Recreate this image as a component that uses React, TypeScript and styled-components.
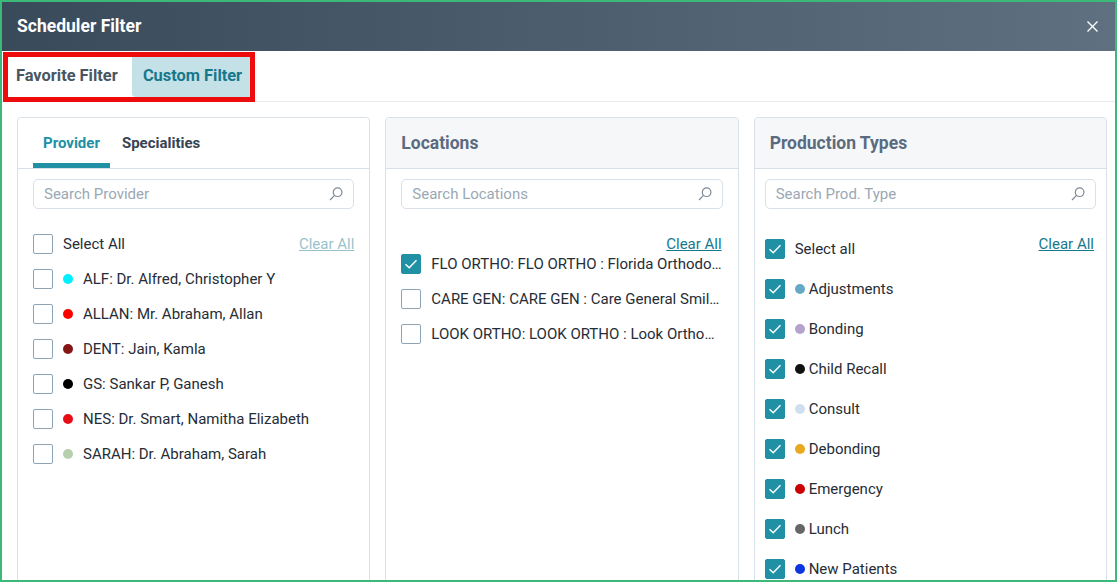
import React from 'react';
import styled, { createGlobalStyle } from 'styled-components';

const GlobalStyle = createGlobalStyle`
    html, body {
        margin: 0;
        height: 100%;
        overflow: hidden;
        background: #fff;
    }
    * {
        box-sizing: border-box;
    }
`;

const Frame = styled.div`
    height: 582px;
    border: 2px solid #3cb878;
    display: flex;
    flex-direction: column;
    overflow: hidden;
    background: #fff;
    font-family: Roboto, "Liberation Sans", sans-serif;
    font-size: 15px;
    color: #262d36;
`;

const Header = styled.div`
    height: 49px;
    flex-shrink: 0;
    display: flex;
    justify-content: space-between;
    align-items: center;
    padding: 0 17px 0 15px;
    background: linear-gradient(90deg, #394a5b 0%, #5f7080 100%);
`;

const Title = styled.span`
    color: #fff;
    font-size: 17.5px;
    font-weight: 700;
    margin-bottom: 2px;
`;

const CloseIcon = styled.svg`
    width: 11px;
    height: 11px;
    display: block;
`;

const TabBar = styled.div`
    height: 51px;
    flex-shrink: 0;
    padding: 1px 0 0 1px;
    border-bottom: 1px solid #e9ecef;
`;

const Highlight = styled.div`
    display: inline-flex;
    height: 50px;
    border: 5px solid #ee0b0b;
`;

const FilterTab = styled.div<{ $active?: boolean }>`
    height: 40px;
    display: flex;
    align-items: center;
    justify-content: ${p => (p.$active ? 'center' : 'flex-start')};
    width: ${p => (p.$active ? '118px' : '124px')};
    font-size: 16.4px;
    font-weight: 700;
    padding: 0 0 4px ${p => (p.$active ? '3px' : '8px')};
    color: ${p => (p.$active ? '#17788c' : '#4a5562')};
    background: ${p => (p.$active ? '#c4e1e7' : 'transparent')};
    border-bottom-left-radius: ${p => (p.$active ? '4px' : '0')};
`;

const Columns = styled.div`
    display: grid;
    grid-template-columns: repeat(3, minmax(0, 1fr));
    gap: 15px;
    padding: 15px 8px 0 15px;
`;

const Card = styled.section`
    height: 520px;
    border: 1px solid #d9e0e8;
    border-radius: 4px;
    background: #fff;
    min-width: 0;
`;

const CardHead = styled.div<{ $tinted?: boolean }>`
    height: 51px;
    display: flex;
    align-items: center;
    padding-left: 15px;
    border-bottom: 1px solid #d9e0e8;
    background: ${p => (p.$tinted ? '#f6f7f9' : '#fff')};
    border-radius: 4px 4px 0 0;
`;

const CardTitle = styled.h3`
    margin: 0 0 1px;
    font-size: 17.5px;
    font-weight: 700;
    color: #5a6b80;
`;

const SubTab = styled.div<{ $active?: boolean }>`
    height: 50px;
    display: flex;
    align-items: center;
    padding: 5px 10px 0;
    margin-right: 2px;
    font-size: 15px;
    font-weight: 700;
    color: ${p => (p.$active ? '#2090a5' : '#374352')};
    border-bottom: 5px solid ${p => (p.$active ? '#2090a5' : 'transparent')};
`;

const CardBody = styled.div<{ $pad: number }>`
    padding: 10px ${p => p.$pad}px 0;
`;

const SearchBox = styled.div`
    height: 30px;
    display: flex;
    align-items: center;
    justify-content: space-between;
    padding: 0 10px;
    border: 1px solid #d9e0e8;
    border-radius: 5px;
    color: #9aa8b4;
`;

const MirroredSearch = styled.svg`
    width: 14px;
    height: 14px;
    display: block;
`;

const SelectAllRow = styled.div`
    display: flex;
    justify-content: space-between;
    align-items: center;
    height: 20px;
    margin-top: 25px;
`;

const ClearRow = styled.div`
    display: flex;
    justify-content: flex-end;
    height: 20px;
    margin-top: 25px;
    line-height: 20px;
`;

const ClearLink = styled.a<{ $muted?: boolean; $inset?: number }>`
    color: #17788c;
    opacity: ${p => (p.$muted ? 0.45 : 1)};
    text-decoration: underline;
    margin-right: ${p => p.$inset ?? 0}px;
`;

const List = styled.div<{ $gap: number; $top: number }>`
    display: flex;
    flex-direction: column;
    gap: ${p => p.$gap}px;
    margin-top: ${p => p.$top}px;
`;

const Row = styled.div`
    display: flex;
    align-items: center;
    height: 20px;
    min-width: 0;
`;

const Box = styled.span<{ $checked?: boolean }>`
    width: 20px;
    height: 20px;
    flex-shrink: 0;
    display: flex;
    align-items: center;
    justify-content: center;
    border-radius: 2px;
    border: 1px solid ${p => (p.$checked ? '#2090a5' : '#8ea3b3')};
    background: ${p => (p.$checked ? '#2090a5' : '#fff')};
    margin-right: 10px;
`;

const CheckMark = styled.svg`
    width: 20px;
    height: 20px;
    display: block;
    flex-shrink: 0;
`;

const Dot = styled.span<{ $color: string; $gap: number }>`
    width: 10px;
    height: 10px;
    flex-shrink: 0;
    border-radius: 50%;
    background: ${p => p.$color};
    margin-right: ${p => p.$gap}px;
`;

const Label = styled.span`
    white-space: nowrap;
`;

const providers = [
    { name: 'ALF: Dr. Alfred, Christopher Y', color: '#00f0ff' },
    { name: 'ALLAN: Mr. Abraham, Allan', color: '#ff0000' },
    { name: 'DENT: Jain, Kamla', color: '#861616' },
    { name: 'GS: Sankar P, Ganesh', color: '#000000' },
    { name: 'NES: Dr. Smart, Namitha Elizabeth', color: '#e80c14' },
    { name: 'SARAH: Dr. Abraham, Sarah', color: '#b8cfae' },
];

// names are shortened the way the list shows them
const locations = [
    { name: 'FLO ORTHO: FLO ORTHO : Florida Orthodo…', checked: true },
    { name: 'CARE GEN: CARE GEN : Care General Smil…', checked: false },
    { name: 'LOOK ORTHO: LOOK ORTHO : Look Ortho…', checked: false },
];

const productionTypes = [
    { name: 'Adjustments', color: '#66a9c6' },
    { name: 'Bonding', color: '#b5a2cd' },
    { name: 'Child Recall', color: '#111111' },
    { name: 'Consult', color: '#cfdff0' },
    { name: 'Debonding', color: '#e8a91e' },
    { name: 'Emergency', color: '#cc0000' },
    { name: 'Lunch', color: '#666666' },
    { name: 'New Patients', color: '#0b35e0' },
];

const Checkbox: React.FC<{ checked?: boolean }> = ({ checked }) => (
    <Box $checked={checked}>
        {checked && (
            <CheckMark viewBox="0 0 20 20" fill="none">
                <path d="M4.5 10.2 L8.2 13.8 L15.5 6.2" stroke="#fff" strokeWidth="1.4" />
            </CheckMark>
        )}
    </Box>
);

const Search: React.FC<{ placeholder: string }> = ({ placeholder }) => (
    <SearchBox>
        {placeholder}
        <MirroredSearch viewBox="0 0 14 14" fill="none" stroke="#7d8a96" strokeWidth="1.2">
            <circle cx="8.6" cy="5.2" r="4.3" />
            <path d="M5.5 8.3 L1 13" />
        </MirroredSearch>
    </SearchBox>
);

export default function App() {
    return (
        <>
            <GlobalStyle />
            <Frame>
                <Header>
                    <Title>Scheduler Filter</Title>
                    <CloseIcon viewBox="0 0 11 11" fill="none" stroke="#fff" strokeWidth="1.4">
                        <path d="M0.5 0.5 L10.5 10.5 M10.5 0.5 L0.5 10.5" />
                    </CloseIcon>
                </Header>
                <TabBar>
                    <Highlight>
                        <FilterTab>Favorite Filter</FilterTab>
                        <FilterTab $active>Custom Filter</FilterTab>
                    </Highlight>
                </TabBar>
                <Columns>
                    <Card>
                        <CardHead>
                            <SubTab $active>Provider</SubTab>
                            <SubTab>Specialities</SubTab>
                        </CardHead>
                        <CardBody $pad={15}>
                            <Search placeholder="Search Provider" />
                            <SelectAllRow>
                                <Row>
                                    <Checkbox />
                                    <Label>Select All</Label>
                                </Row>
                                <ClearLink $muted>Clear All</ClearLink>
                            </SelectAllRow>
                            <List $gap={15} $top={15}>
                                {providers.map(p => (
                                    <Row key={p.name}>
                                        <Checkbox />
                                        <Dot $color={p.color} $gap={10} />
                                        <Label>{p.name}</Label>
                                    </Row>
                                ))}
                            </List>
                        </CardBody>
                    </Card>
                    <Card>
                        <CardHead $tinted>
                            <CardTitle>Locations</CardTitle>
                        </CardHead>
                        <CardBody $pad={15}>
                            <Search placeholder="Search Locations" />
                            <ClearRow>
                                <ClearLink $inset={1}>Clear All</ClearLink>
                            </ClearRow>
                            <List $gap={15} $top={0}>
                                {locations.map(l => (
                                    <Row key={l.name}>
                                        <Checkbox checked={l.checked} />
                                        <Label>{l.name}</Label>
                                    </Row>
                                ))}
                            </List>
                        </CardBody>
                    </Card>
                    <Card>
                        <CardHead $tinted>
                            <CardTitle>Production Types</CardTitle>
                        </CardHead>
                        <CardBody $pad={10}>
                            <Search placeholder="Search Prod. Type" />
                            <ClearRow>
                                <ClearLink $inset={2}>Clear All</ClearLink>
                            </ClearRow>
                            <List $gap={20} $top={-15}>
                                <Row>
                                    <Checkbox checked />
                                    <Label>Select all</Label>
                                </Row>
                                {productionTypes.map(t => (
                                    <Row key={t.name}>
                                        <Checkbox checked />
                                        <Dot $color={t.color} $gap={4} />
                                        <Label>{t.name}</Label>
                                    </Row>
                                ))}
                            </List>
                        </CardBody>
                    </Card>
                </Columns>
            </Frame>
        </>
    );
}
